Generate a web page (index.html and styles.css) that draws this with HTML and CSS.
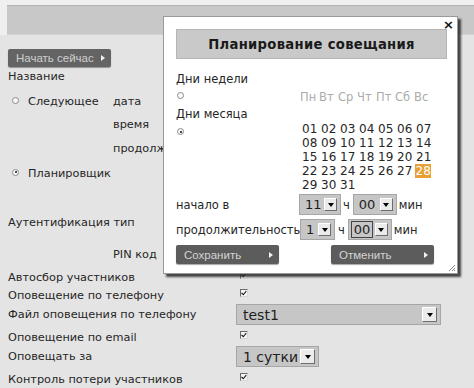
FILE: index.html
```html
<!DOCTYPE html>
<html lang="ru">
<head>
<meta charset="utf-8">
<title>Планирование совещания</title>
<link rel="stylesheet" href="styles.css">
</head>
<body>
<div class="header"><div class="topbar"></div></div>
<main class="form">
  <button class="btn start">Начать сейчас<span class="tri"></span></button>
  <div class="row r1"><span class="lbl wide">Название</span></div>
  <div class="row r2"><span class="lbl"><i class="radio"></i>Следующее</span><span class="sub">дата</span></div>
  <div class="row r3"><span class="lbl"></span><span class="sub">время</span></div>
  <div class="row r4"><span class="lbl"></span><span class="sub">продолжительность</span></div>
  <div class="row r5"><span class="lbl wide"><i class="radio on"></i>Планировщик</span></div>
  <div class="row r6"><span class="lbl wide">Аутентификация тип</span></div>
  <div class="row r7"><span class="lbl"></span><span class="sub">PIN код</span></div>
  <div class="row r8"><span class="lbl wide">Автосбор участников</span><span class="val"><i class="check"></i></span></div>
  <div class="row r9"><span class="lbl wide">Оповещение по телефону</span><span class="val"><i class="check"></i></span></div>
  <div class="row r10"><span class="lbl wide">Файл оповещения по телефону</span><span class="val"><span class="sel big wfile"><span class="v">test1</span><span class="arr"></span></span></span></div>
  <div class="row r11"><span class="lbl wide">Оповещение по email</span><span class="val"><i class="check"></i></span></div>
  <div class="row r12"><span class="lbl wide">Оповещать за</span><span class="val"><span class="sel big wday"><span class="v">1 сутки</span><span class="arr"></span></span></span></div>
  <div class="row r13"><span class="lbl wide">Контроль потери участников</span><span class="val"><i class="check"></i></span></div>
</main>

<section class="modal">
  <span class="close">×</span>
  <h1 class="mtitle">Планирование совещания</h1>
  <div class="mgrid">
    <div class="mlabel span">Дни недели</div>
    <div class="mrad"><i class="radio"></i></div>
    <div class="days weekdays"><span>Пн</span><span>Вт</span><span>Ср</span><span>Чт</span><span>Пт</span><span>Сб</span><span>Вс</span></div>
    <div class="mlabel span">Дни месяца</div>
    <div class="mrad m2"><i class="radio on"></i></div>
    <div class="days dates">
      <span>01</span><span>02</span><span>03</span><span>04</span><span>05</span><span>06</span><span>07</span>
      <span>08</span><span>09</span><span>10</span><span>11</span><span>12</span><span>13</span><span>14</span>
      <span>15</span><span>16</span><span>17</span><span>18</span><span>19</span><span>20</span><span>21</span>
      <span>22</span><span>23</span><span>24</span><span>25</span><span>26</span><span>27</span><span><b class="hl">28</b></span>
      <span>29</span><span>30</span><span>31</span>
    </div>
    <div class="mlabel trow">начало в</div>
    <div class="time trow">
      <span class="sel w42 first"><span class="v">11</span><span class="arr"></span></span>
      <span class="unit u1">ч</span>
      <span class="sel w44"><span class="v">00</span><span class="arr"></span></span>
      <span class="unit">мин</span>
    </div>
    <div class="mlabel trow2">продолжительность</div>
    <div class="time trow2">
      <span class="sel w35"><span class="v">1</span><span class="arr"></span></span>
      <span class="unit u2">ч</span>
      <span class="sel w44 focus"><span class="v">00</span><span class="arr"></span></span>
      <span class="unit">мин</span>
    </div>
  </div>
  <div class="mbtns">
    <button class="btn">Сохранить<span class="tri"></span></button>
    <button class="btn">Отменить<span class="tri"></span></button>
  </div>
  <svg class="grip" width="8" height="8" viewBox="0 0 8 8"><path d="M7 1L1 7M7 4L4 7M7 6L6 7" stroke="#888" stroke-width="1"/></svg>
</section>
</body>
</html>
```

FILE: styles.css
```css
* { box-sizing: border-box; }
html, body { margin: 0; padding: 0; }
body {
  width: 474px;
  height: 388px;
  overflow: hidden;
  background: #e4e4e4;
  font-family: "DejaVu Sans", Verdana, sans-serif;
  font-size: 11.3px;
  color: #262626;
  position: relative;
}
.header { background: #efefef; padding: 5px 0 0 7px; }
.topbar {
  height: 30px;
  background: #c8c8c8;
  border-top: 1px solid #b2b2b2;
  border-bottom: 1px solid #d2d2d2;
}
.form { padding: 14px 8px 0 8px; }

.btn {
  display: flex;
  align-items: center;
  justify-content: space-between;
  width: 103px;
  height: 19px;
  padding: 0 6px 0 8px;
  border: 0;
  border-radius: 2px;
  background: #5c5c5c;
  color: #d4d4d4;
  font-family: "Liberation Sans", Arial, sans-serif;
  font-size: 11.5px;
  box-shadow: 0 1px 1px rgba(0,0,0,.35);
}
.btn .tri {
  width: 0; height: 0;
  border-top: 3.5px solid transparent;
  border-bottom: 3.5px solid transparent;
  border-left: 4px solid #f2f2f2;
}
.start { height: 18px; background: #646464; color: #cfcfcf; }

.row {
  display: grid;
  grid-template-columns: 105px 123px 1fr;
  align-items: center;
  height: 18px;
}
.lbl { display: flex; align-items: center; white-space: nowrap; }
.lbl.wide { grid-column: 1 / 3; }
.sub { white-space: nowrap; }
.val { display: flex; align-items: center; }
.row.r10, .row.r12 { height: 21px; }
.r2 { margin-top: 7px; }
.r3 { margin-top: 5px; }
.r4 { margin-top: 6px; }
.r5 { margin-top: 7px; }
.r6 { margin-top: 31px; }
.r7 { margin-top: 14px; }
.r8 { margin-top: 5px; }
.r11 { margin-top: 3px; }
.r13 { margin-top: 3px; }

.radio {
  display: inline-block;
  width: 7px; height: 7px;
  border-radius: 50%;
  border: 1px solid #8a8a8a;
  background: #fafafa;
  position: relative;
}
.lbl .radio { margin: 0 9px 2px 4px; }
.radio.on::after {
  content: "";
  position: absolute;
  left: 1.5px; top: 1.5px;
  width: 2px; height: 2px;
  border-radius: 50%;
  background: #111;
}
.check {
  display: inline-block;
  width: 8px; height: 8px;
  margin: 0 0 4px 4px;
  border: 1px solid;
  border-color: #6a6a6a #d8d8d8 #d8d8d8 #6a6a6a;
  background: #f4f4f4;
  position: relative;
}
.check::after {
  content: "";
  position: absolute;
  left: 1px; top: 0px;
  width: 2px; height: 4px;
  border: solid #111;
  border-width: 0 1.5px 1.5px 0;
  transform: rotate(40deg);
  transform-origin: 60% 60%;
}

.sel {
  display: inline-flex;
  align-items: center;
  justify-content: space-between;
  height: 21px;
  padding: 0 3px 0 5px;
  border: 1px solid #a6a6a6;
  background: #c6c6c6;
  font-size: 13px;
  color: #1e1e1e;
}
.sel .arr {
  display: flex;
  align-items: center;
  justify-content: center;
  width: 13px; height: 13px;
  background: #ebebeb;
  border: 1px solid;
  border-color: #fff #6e6e6e #6e6e6e #fff;
}
.sel .arr::after {
  content: "";
  border-left: 3.5px solid transparent;
  border-right: 3.5px solid transparent;
  border-top: 4px solid #000;
}
.sel.big { font-size: 14px; padding: 0 3px 0 6px; }
.sel.big .arr { width: 15px; height: 15px; }
.wfile { width: 205px; }
.wday { width: 83px; }
.w42 { width: 42px; }
.w44 { width: 44px; }
.w35 { width: 35px; }
.sel.focus { padding-left: 2px; }
.sel.focus .v { border: 1px solid #444; padding: 0 2px; line-height: 15px; }

.modal {
  position: absolute;
  left: 163px; top: 16px;
  width: 295px; height: 258px;
  background: #fff;
  border: 1px solid #9a9a9a;
  box-shadow: 3px 3px 2px rgba(40,40,40,.85);
  padding: 12px 10px 0 12px;
  font-size: 11.5px;
}
.close {
  position: absolute;
  right: 3px; top: 1px;
  font-weight: bold;
  font-size: 13px;
  line-height: 14px;
  color: #111;
}
.mtitle {
  margin: 0;
  height: 30px;
  background: #c9c9c9;
  border: 1px solid #b5b5b5;
  display: flex;
  align-items: center;
  justify-content: center;
  font-size: 13.2px;
  font-weight: bold;
  letter-spacing: 0.3px;
  color: #1a1a1a;
}
.mgrid {
  display: grid;
  grid-template-columns: 124px 1fr;
  margin-top: 12px;
}
.mlabel { line-height: 16px; white-space: nowrap; }
.span { grid-column: 1 / 3; }
.mrad { padding: 1px 0 0 1px; height: 19px; }
.mrad.m2 { padding-top: 2px; height: auto; }
.days { display: flex; flex-wrap: wrap; padding-left: 2px; }
.days span { width: 19px; white-space: nowrap; }
.weekdays { color: #ababab; padding-top: 2px; line-height: 16px; height: 19px; font-size: 11.5px; margin-left: -2px; }
.dates { line-height: 14px; width: 140px; font-size: 12px; }
.hl { font-weight: normal; background: #e8a034; color: #fff; padding: 0 0.5px; margin-left: -1px; display: inline-block; }
.trow { margin-top: 2px; }
.trow2 { margin-top: 4px; }
.mlabel.trow, .mlabel.trow2 { align-self: center; }
.time { display: flex; align-items: center; }
.time .first { margin-left: -1px; }
.unit { margin: 0 3px 0 2px; }
.u1 { margin-right: 3px; }
.u2 { margin: 0 3px 0 3px; }
.mbtns { display: flex; gap: 52px; margin-top: 5px; }
.grip { position: absolute; right: 1px; bottom: 1px; }
```
